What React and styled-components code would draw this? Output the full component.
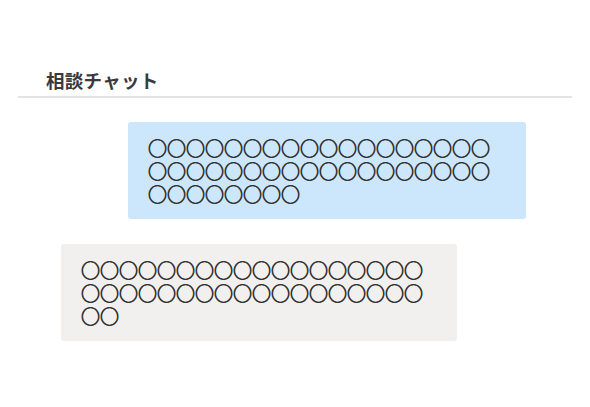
import React from 'react';
import styled, { createGlobalStyle } from 'styled-components';

const GlobalStyle = createGlobalStyle`
  body {
    margin: 0;
    background: #ffffff;
    font-family: "Noto Sans CJK JP", "Noto Sans", sans-serif;
    color: #333333;
  }
`;

const Page = styled.div`
  padding: 66px 18px 0 18px;
`;

const Header = styled.div`
  border-bottom: 2px solid #e3e3e3;
  padding: 0 0 2px 28px;
`;

const Title = styled.h1`
  margin: 0;
  font-size: 18.5px;
  font-weight: bold;
  line-height: 28px;
  color: #3a3a3a;
  letter-spacing: 0.3px;
`;

const Chat = styled.div`
  display: flex;
  flex-direction: column;
  gap: 25px;
  padding-top: 24px;
`;

const Bubble = styled.div`
  box-sizing: border-box;
  width: ${props => props.width}px;
  margin-left: ${props => props.offset}px;
  padding: 14px 18px 14px 20px;
  background: ${props => props.mine ? '#cce6fb' : '#f1f0ee'};
  border-radius: 3px;
  font-size: 19px;
  line-height: 23px;
  color: #333333;
  -webkit-text-stroke: 0.7px #333333;
  word-break: break-all;
`;

const circles = n => '○'.repeat(n);

export default function App() {
  return (
    <>
      <GlobalStyle />
      <Page>
        <Header>
          <Title>相談チャット</Title>
        </Header>
        <Chat>
          <Bubble mine width={398} offset={110}>{circles(44)}</Bubble>
          <Bubble width={396} offset={43}>{circles(38)}</Bubble>
        </Chat>
      </Page>
    </>
  );
}
